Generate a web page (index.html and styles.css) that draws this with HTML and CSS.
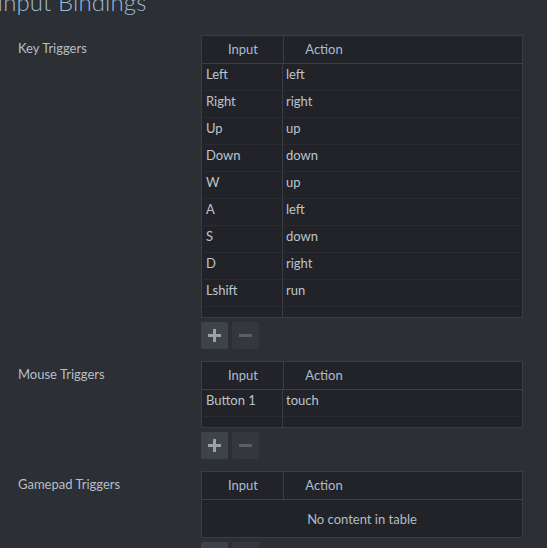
FILE: index.html
```html
<!DOCTYPE html>
<html>
<head>
<meta charset="utf-8">
<link rel="stylesheet" href="styles.css">
</head>
<body>
<div class="page">
  <h1 class="title">Input Bindings</h1>

  <section class="group">
    <div class="label">Key Triggers</div>
    <div class="field">
      <div class="table">
        <div class="thead">
          <div class="th col-input">Input</div>
          <div class="th col-action">Action</div>
        </div>
        <div class="tbody">
          <div class="row"><div class="td col-input">Left</div><div class="td col-rest">left</div></div>
          <div class="row"><div class="td col-input">Right</div><div class="td col-rest">right</div></div>
          <div class="row"><div class="td col-input">Up</div><div class="td col-rest">up</div></div>
          <div class="row"><div class="td col-input">Down</div><div class="td col-rest">down</div></div>
          <div class="row"><div class="td col-input">W</div><div class="td col-rest">up</div></div>
          <div class="row"><div class="td col-input">A</div><div class="td col-rest">left</div></div>
          <div class="row"><div class="td col-input">S</div><div class="td col-rest">down</div></div>
          <div class="row"><div class="td col-input">D</div><div class="td col-rest">right</div></div>
          <div class="row"><div class="td col-input">Lshift</div><div class="td col-rest">run</div></div>
          <div class="row filler"><div class="td col-input"></div><div class="td col-rest"></div></div>
        </div>
      </div>
      <div class="buttons">
        <button class="btn btn-add" aria-label="Add"><svg width="13" height="13" viewBox="0 0 13 13"><rect x="5" y="0" width="3" height="13" fill="#9aa0a8"/><rect x="0" y="5" width="13" height="3" fill="#9aa0a8"/></svg></button>
        <button class="btn btn-remove" aria-label="Remove"><svg width="13" height="13" viewBox="0 0 13 13"><rect x="0" y="5" width="13" height="3" fill="#5a5f66"/></svg></button>
      </div>
    </div>
  </section>

  <section class="group">
    <div class="label">Mouse Triggers</div>
    <div class="field">
      <div class="table">
        <div class="thead">
          <div class="th col-input">Input</div>
          <div class="th col-action">Action</div>
        </div>
        <div class="tbody">
          <div class="row"><div class="td col-input">Button 1</div><div class="td col-rest">touch</div></div>
          <div class="row filler"><div class="td col-input"></div><div class="td col-rest"></div></div>
        </div>
      </div>
      <div class="buttons">
        <button class="btn btn-add" aria-label="Add"><svg width="13" height="13" viewBox="0 0 13 13"><rect x="5" y="0" width="3" height="13" fill="#9aa0a8"/><rect x="0" y="5" width="13" height="3" fill="#9aa0a8"/></svg></button>
        <button class="btn btn-remove" aria-label="Remove"><svg width="13" height="13" viewBox="0 0 13 13"><rect x="0" y="5" width="13" height="3" fill="#5a5f66"/></svg></button>
      </div>
    </div>
  </section>

  <section class="group">
    <div class="label">Gamepad Triggers</div>
    <div class="field">
      <div class="table">
        <div class="thead">
          <div class="th col-input">Input</div>
          <div class="th col-action">Action</div>
        </div>
        <div class="tbody">
          <div class="empty">No content in table</div>
        </div>
      </div>
      <div class="buttons">
        <button class="btn btn-add" aria-label="Add"><svg width="13" height="13" viewBox="0 0 13 13"><rect x="5" y="0" width="3" height="13" fill="#9aa0a8"/><rect x="0" y="5" width="13" height="3" fill="#9aa0a8"/></svg></button>
        <button class="btn btn-remove" aria-label="Remove"><svg width="13" height="13" viewBox="0 0 13 13"><rect x="0" y="5" width="13" height="3" fill="#5a5f66"/></svg></button>
      </div>
    </div>
  </section>
</div>
</body>
</html>
```

FILE: styles.css
```css
html, body {
  margin: 0;
  padding: 0;
  background: #2c2f34;
  height: 100%;
  overflow: hidden;
}

.page {
  font-family: Lato, "Open Sans", sans-serif;
  font-size: 13px;
  color: #b4bcc6;
}

.title {
  margin: -16px 0 16px -3px;
  height: 35px;
  font-family: Lato, sans-serif;
  font-weight: 300;
  font-size: 24px;
  line-height: 35px;
  color: #9fbad6;
  letter-spacing: 0.1px;
}

.group {
  display: grid;
  grid-template-columns: 201px 322px;
  margin-bottom: 12px;
}

.label {
  padding-left: 18px;
  height: 27px;
  line-height: 26px;
  color: #b6bec8;
}

.field {
  display: flex;
  flex-direction: column;
  gap: 4px;
}

.table {
  border: 1px solid #3a3d43;
  background: #212328;
  box-sizing: border-box;
  width: 322px;
}

.thead {
  display: flex;
  height: 27px;
  border-bottom: 1px solid #3c3f45;
  padding: 0 1px;
}

.th {
  line-height: 27px;
  text-align: center;
  color: #a9bdd2;
}

.col-input {
  width: 80px;
  flex: none;
  border-right: 1px solid #3a3d43;
}

.th.col-action {
  width: 80px;
}

.tbody {
  padding: 0 1px;
}

.row {
  display: flex;
  height: 27px;
  border-bottom: 1px solid #2a2c31;
  box-sizing: border-box;
}

.row.filler {
  height: 10px;
  border-bottom: none;
}

.td {
  line-height: 21px;
  color: #bcc4cd;
}

.td.col-input {
  padding-left: 3px;
  box-sizing: border-box;
}

.col-rest {
  flex: 1;
  padding-left: 3px;
}

.empty {
  height: 37px;
  line-height: 38px;
  text-align: center;
  color: #b4bcc6;
}

.buttons {
  display: flex;
  gap: 4px;
}

.btn {
  width: 27px;
  height: 27px;
  padding: 0;
  border: none;
  border-radius: 2px;
  display: flex;
  align-items: center;
  justify-content: center;
}

.btn-add {
  background: #3e4249;
}

.btn-remove {
  background: #34373d;
}
```
